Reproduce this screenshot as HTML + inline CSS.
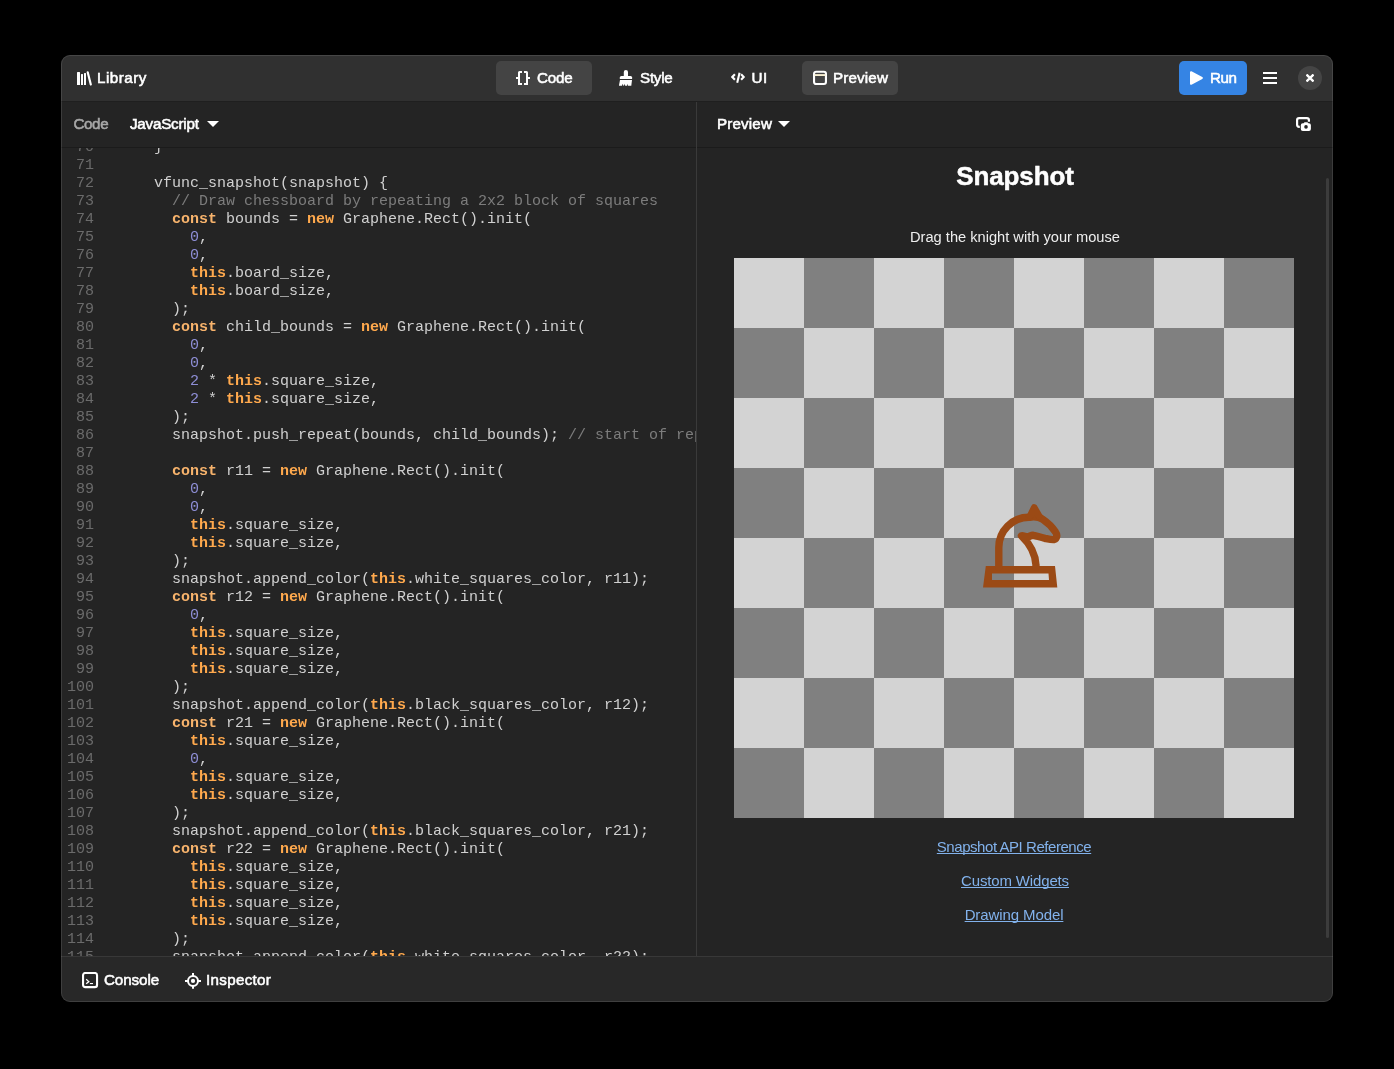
<!DOCTYPE html>
<html><head><meta charset="utf-8">
<style>
*{margin:0;padding:0;box-sizing:border-box}
html,body{width:1394px;height:1069px;background:#000;overflow:hidden}
body{font-family:"Liberation Sans",sans-serif;color:#fff;position:relative}
.win{will-change:transform;position:absolute;left:61px;top:55px;width:1272px;height:947px;background:#242424;border-radius:9px;overflow:hidden}
.bdr{position:absolute;left:0;top:0;width:1272px;height:947px;border:1px solid rgba(255,255,255,0.11);border-radius:9px;pointer-events:none}
.hdr{position:absolute;left:0;top:0;width:1272px;height:47px;background:#303030;border-bottom:1px solid #1f1f1f}
.abs{position:absolute}
.lbl{font-weight:normal;font-size:15.2px;line-height:18px;white-space:nowrap;-webkit-text-stroke:0.55px currentColor}
.btn{position:absolute;top:6px;height:34px;border-radius:5px}
.btn.on{background:#444}
.tb{position:absolute;top:47px;height:46px;background:#242424;border-bottom:1px solid #1b1b1b}
.sep{position:absolute;left:635px;top:47px;width:1px;height:854px;background:#3a3a3a}
.code{position:absolute;left:0;top:93px;width:635px;height:808px;overflow:hidden;background:#242424}
pre{font-family:"Liberation Mono",monospace;font-size:15px;line-height:18px;position:absolute;white-space:pre}
.nums{left:0;width:33px;text-align:right;color:#6b6b6b}
.src{left:57px;color:#d0d0d0}
.k{color:#f7b36c}
.t{color:#ffa94d}
.n{color:#8e8ed6}
.c{color:#7c7c7c}
.prev{position:absolute;left:636px;top:93px;width:636px;height:808px;background:#242424}
.bot{position:absolute;left:0;top:901px;width:1272px;height:46px;background:#282828;border-top:1px solid #383838}
.link{position:absolute;color:#82b2ec;text-decoration:underline;text-decoration-skip-ink:none;font-size:15px;white-space:nowrap;text-align:center;width:636px;left:0}
</style></head><body>
<div class="win">
  <div class="hdr">
    <!-- Library -->
    <svg class="abs" style="left:16px;top:15px" width="18" height="18" viewBox="0 0 18 18" fill="#fff">
      <rect x="0" y="2" width="3" height="13" rx="0.5"/><rect x="4" y="4" width="2" height="11" rx="0.5"/><rect x="7" y="3" width="2" height="12" rx="0.5"/>
      <path d="M10.7 2.3 L13.8 14.4" stroke="#fff" stroke-width="2.2" stroke-linecap="round"/>
    </svg>
    <div class="abs lbl" style="left:36px;top:14px;letter-spacing:0.5px">Library</div>

    <div class="btn on" style="left:435px;width:96px"></div>
    <svg class="abs" style="left:455px;top:16px" width="14" height="14" viewBox="0 0 14 14" fill="#fff">
      <path d="M2 1.5 Q2 0 3.5 0 H6 V2 H4 V14 H3.5 Q2 14 2 12.5 Z"/><rect x="2" y="12" width="4" height="2"/><rect x="0" y="6" width="2.5" height="2"/>
      <path d="M12 1.5 Q12 0 10.5 0 H8 V2 H10 V14 H10.5 Q12 14 12 12.5 Z"/><rect x="8" y="12" width="4" height="2"/><rect x="11.5" y="6" width="2.5" height="2"/>
    </svg>
    <div class="abs lbl" style="left:476px;top:14px;letter-spacing:-0.2px">Code</div>

    <svg class="abs" style="left:558px;top:15px" width="14" height="16" viewBox="0 0 14 16" fill="#fff">
      <path d="M4.8 2 Q4.8 0 6.9 0 Q9 0 9 2 V6 H4.8 Z"/>
      <path d="M0.8 7.5 Q0.8 6 2.3 6 H11.6 Q13.1 6 13.1 7.5 V9 H0.8 Z"/>
      <path d="M1 10.1 H13 L12.3 15.8 H9 L8.5 13.7 L8 15.8 H6.2 L5.6 13.7 L5 15.8 H4.4 L3.7 13.7 L3 15.8 H-0.1 Z"/>
    </svg>
    <div class="abs lbl" style="left:579px;top:14px;letter-spacing:-0.25px">Style</div>

    <svg class="abs" style="left:670px;top:16px" width="16" height="14" viewBox="0 0 16 14" fill="none" stroke="#fff" stroke-width="2.1">
      <path d="M3.9 3.2 L1.3 6 L3.9 8.8"/><path d="M10.1 3.2 L12.7 6 L10.1 8.8"/><path d="M8.6 1.8 L6.2 11.8"/>
    </svg>
    <div class="abs lbl" style="left:690.5px;top:14px;letter-spacing:0.5px">UI</div>

    <div class="btn on" style="left:741px;width:96px"></div>
    <svg class="abs" style="left:752px;top:15px" width="15" height="16" viewBox="0 0 15 16" fill="none">
      <rect x="1.05" y="1.75" width="11.9" height="12.3" rx="2" stroke="#fff" stroke-width="2.1"/>
      <rect x="1.5" y="4.1" width="11" height="1.9" fill="#f8efd2"/>
    </svg>
    <div class="abs lbl" style="left:772px;top:14px;letter-spacing:0.15px">Preview</div>

    <div class="btn" style="left:1118px;width:68px;background:#3584e4"></div>
    <svg class="abs" style="left:1128px;top:16px" width="14" height="14" viewBox="0 0 14 14" fill="#fff">
      <path d="M2 1.2 L12.8 7 L2 12.8 Z" stroke="#fff" stroke-width="2" stroke-linejoin="round"/>
    </svg>
    <div class="abs lbl" style="left:1149px;top:14px;letter-spacing:-0.5px">Run</div>

    <svg class="abs" style="left:1202px;top:17px" width="14" height="12" viewBox="0 0 14 12" fill="#fff">
      <rect x="0" y="0" width="14" height="2"/><rect x="0" y="5" width="14" height="2"/><rect x="0" y="10" width="14" height="2"/>
    </svg>

    <div class="abs" style="left:1237px;top:11px;width:24px;height:24px;border-radius:50%;background:#454545"></div>
    <svg class="abs" style="left:1245px;top:19px" width="8" height="8" viewBox="0 0 8 8" stroke="#fff" stroke-width="2.3">
      <path d="M0.5 0.5 L7.5 7.5 M7.5 0.5 L0.5 7.5"/>
    </svg>
  </div>

  <div class="tb" style="left:0;width:635px">
    <div class="abs lbl" style="left:12.5px;top:13px;color:#a8a8a8;letter-spacing:-0.4px">Code</div>
    <div class="abs lbl" style="left:69px;top:13px;letter-spacing:-0.22px">JavaScript</div>
    <svg class="abs" style="left:146px;top:19px" width="12" height="6" viewBox="0 0 12 6" fill="#fff"><path d="M0 0 H12 L6 6 Z"/></svg>
  </div>
  <div class="code">
    <pre class="nums" style="top:-9px">70
71
72
73
74
75
76
77
78
79
80
81
82
83
84
85
86
87
88
89
90
91
92
93
94
95
96
97
98
99
100
101
102
103
104
105
106
107
108
109
110
111
112
113
114
115</pre>
    <pre class="src" style="top:-9px">    }

    vfunc_snapshot(snapshot) {
      <span class="c">// Draw chessboard by repeating a 2x2 block of squares</span>
      <b class="k">const</b> bounds = <b class="t">new</b> Graphene.Rect().init(
        <span class="n">0</span>,
        <span class="n">0</span>,
        <b class="t">this</b>.board_size,
        <b class="t">this</b>.board_size,
      );
      <b class="k">const</b> child_bounds = <b class="t">new</b> Graphene.Rect().init(
        <span class="n">0</span>,
        <span class="n">0</span>,
        <span class="n">2</span> * <b class="t">this</b>.square_size,
        <span class="n">2</span> * <b class="t">this</b>.square_size,
      );
      snapshot.push_repeat(bounds, child_bounds); <span class="c">// start of repeat</span>

      <b class="k">const</b> r11 = <b class="t">new</b> Graphene.Rect().init(
        <span class="n">0</span>,
        <span class="n">0</span>,
        <b class="t">this</b>.square_size,
        <b class="t">this</b>.square_size,
      );
      snapshot.append_color(<b class="t">this</b>.white_squares_color, r11);
      <b class="k">const</b> r12 = <b class="t">new</b> Graphene.Rect().init(
        <span class="n">0</span>,
        <b class="t">this</b>.square_size,
        <b class="t">this</b>.square_size,
        <b class="t">this</b>.square_size,
      );
      snapshot.append_color(<b class="t">this</b>.black_squares_color, r12);
      <b class="k">const</b> r21 = <b class="t">new</b> Graphene.Rect().init(
        <b class="t">this</b>.square_size,
        <span class="n">0</span>,
        <b class="t">this</b>.square_size,
        <b class="t">this</b>.square_size,
      );
      snapshot.append_color(<b class="t">this</b>.black_squares_color, r21);
      <b class="k">const</b> r22 = <b class="t">new</b> Graphene.Rect().init(
        <b class="t">this</b>.square_size,
        <b class="t">this</b>.square_size,
        <b class="t">this</b>.square_size,
        <b class="t">this</b>.square_size,
      );
      snapshot.append_color(<b class="t">this</b>.white_squares_color, r22);</pre>
  </div>

  <div class="sep"></div>

  <div class="tb" style="left:636px;width:636px">
    <div class="abs lbl" style="left:20px;top:13px;letter-spacing:0.15px">Preview</div>
    <svg class="abs" style="left:81px;top:19px" width="12" height="6" viewBox="0 0 12 6" fill="#fff"><path d="M0 0 H12 L6 6 Z"/></svg>
    <svg class="abs" style="left:598px;top:14px" width="17" height="16" viewBox="0 0 17 16" fill="none" stroke="#fff" stroke-width="2.2">
      <path d="M4.8 10.8 H4.1 Q2.1 10.8 2.1 8.8 V4.1 Q2.1 2.1 4.1 2.1 H11.9 Q13.9 2.1 13.9 4.1 V5.7"/>
      <path d="M7.8 7.3 H8.7 Q9 6.2 10 6.2 H12 Q13 6.2 13.3 7.3 H13.9 Q15.9 7.3 15.9 9.3 V12.9 Q15.9 14.9 13.9 14.9 H7.8 Q5.8 14.9 5.8 12.9 V9.3 Q5.8 7.3 7.8 7.3 Z" fill="#fff" stroke="none"/>
      <circle cx="11" cy="10.9" r="1.8" fill="#242424" stroke="none"/>
    </svg>
  </div>
  <div class="prev">
    <div class="abs" style="left:0;top:12px;width:636px;text-align:center;font-size:26px;font-weight:bold;line-height:32px;-webkit-text-stroke:0.5px #fff;letter-spacing:-0.1px">Snapshot</div>
    <div class="abs" style="left:0;top:80px;width:636px;text-align:center;font-size:14.65px;line-height:18px;color:#eee">Drag the knight with your mouse</div>
    <svg class="abs" style="left:37px;top:110px" width="560" height="560" viewBox="0 0 560 560">
      <rect width="560" height="560" fill="#d3d3d3"/>
      <g fill="#808080"><rect x="70" y="0" width="70" height="70"/><rect x="210" y="0" width="70" height="70"/><rect x="350" y="0" width="70" height="70"/><rect x="490" y="0" width="70" height="70"/><rect x="0" y="70" width="70" height="70"/><rect x="140" y="70" width="70" height="70"/><rect x="280" y="70" width="70" height="70"/><rect x="420" y="70" width="70" height="70"/><rect x="70" y="140" width="70" height="70"/><rect x="210" y="140" width="70" height="70"/><rect x="350" y="140" width="70" height="70"/><rect x="490" y="140" width="70" height="70"/><rect x="0" y="210" width="70" height="70"/><rect x="140" y="210" width="70" height="70"/><rect x="280" y="210" width="70" height="70"/><rect x="420" y="210" width="70" height="70"/><rect x="70" y="280" width="70" height="70"/><rect x="210" y="280" width="70" height="70"/><rect x="350" y="280" width="70" height="70"/><rect x="490" y="280" width="70" height="70"/><rect x="0" y="350" width="70" height="70"/><rect x="140" y="350" width="70" height="70"/><rect x="280" y="350" width="70" height="70"/><rect x="420" y="350" width="70" height="70"/><rect x="70" y="420" width="70" height="70"/><rect x="210" y="420" width="70" height="70"/><rect x="350" y="420" width="70" height="70"/><rect x="490" y="420" width="70" height="70"/><rect x="0" y="490" width="70" height="70"/><rect x="140" y="490" width="70" height="70"/><rect x="280" y="490" width="70" height="70"/><rect x="420" y="490" width="70" height="70"/></g>
      <path fill="#9b4a15" fill-rule="evenodd" d="M251.8 308.1 H321 L323.3 329.6 H249 Z M258 315.6 V322.1 H315 L314.5 315.6 Z"/>
      <g fill="none" stroke="#9b4a15" stroke-width="7.4" stroke-linejoin="round" stroke-linecap="round">
        <path d="M264.8 309 V289.4 A30.1 30.1 0 0 1 295 259.3"/>
        <path d="M302 309 C302 296 295 285 287.5 277.8 C290 277.5 292 279 294.5 278.6 C296.5 278.2 297.5 276.8 299.5 277.3 C303 278 306 279.3 311 280.3 C315 281.2 318 282 320 281.6 C323 280.6 323.6 277 321.5 274 C318.5 269.5 313.5 264.5 309 261.5 C304.5 258.5 300 258.3 295 259.3"/>
        <path d="M296.3 257.8 L300.2 249.6 L305 258" stroke-width="6.8"/>
      </g>
    </svg>
    <div class="link" style="top:690px;letter-spacing:-0.45px;left:-1px">Snapshot API Reference</div>
    <div class="link" style="top:724px;letter-spacing:-0.15px">Custom Widgets</div>
    <div class="link" style="top:758px;letter-spacing:-0.1px;left:-1px">Drawing Model</div>
    <div class="abs" style="left:629px;top:30px;width:3px;height:760px;border-radius:2px;background:#3c3c3c"></div>
  </div>

  <div class="bot">
    <svg class="abs" style="left:21px;top:15px" width="17" height="17" viewBox="0 0 17 17" fill="none" stroke="#fff" stroke-width="2.1">
      <rect x="1.05" y="1" width="14" height="14.1" rx="2.2"/>
      <path d="M4.2 7.2 L6.8 9.6 L4.2 11.7" stroke-width="1.3"/><rect x="7.9" y="11" width="3.1" height="1.1" fill="#fff" stroke="none"/>
    </svg>
    <div class="abs lbl" style="left:43px;top:14px;letter-spacing:-0.1px">Console</div>
    <svg class="abs" style="left:123px;top:15px" width="18" height="18" viewBox="0 0 18 18" fill="none" stroke="#fff" stroke-width="2">
      <circle cx="9" cy="8.9" r="5"/><circle cx="9" cy="8.9" r="2.1" fill="#fff" stroke="none"/>
      <path d="M9 0.9 V4 M9 13.8 V16.8 M1 8.9 H4 M14 8.9 H17"/>
    </svg>
    <div class="abs lbl" style="left:145px;top:14px;letter-spacing:0.3px">Inspector</div>
  </div>
<div class="bdr"></div>
</div>
</body></html>
